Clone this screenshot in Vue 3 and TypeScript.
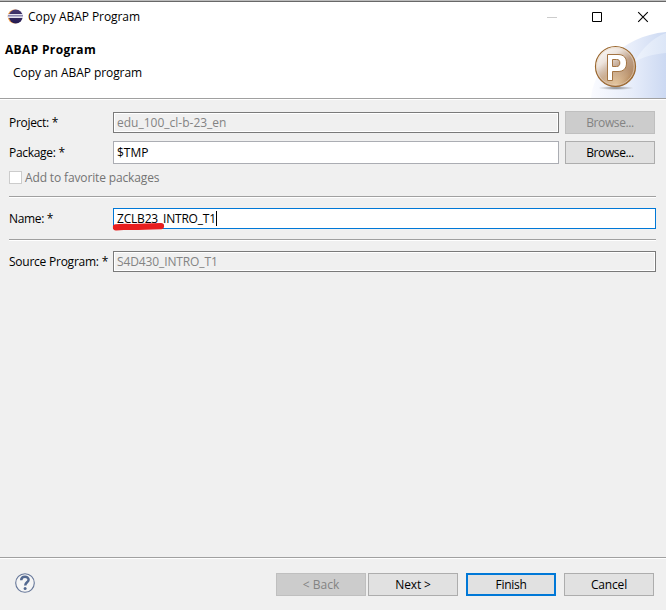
<script setup lang="ts">
import { ref } from 'vue'

const project = ref('edu_100_cl-b-23_en')
const packageName = ref('$TMP')
const programName = ref('ZCLB23_INTRO_T1')
const sourceProgram = ref('S4D430_INTRO_T1')
</script>

<template>
  <main class="dialog">
    <div class="titlebar">
      <svg class="app-icon" width="16" height="16" viewBox="0 0 16 16">
        <defs>
          <linearGradient id="ball" x1="0" y1="0" x2="0" y2="1">
            <stop offset="0" stop-color="#44366f" />
            <stop offset="1" stop-color="#251c52" />
          </linearGradient>
        </defs>
        <circle cx="7.6" cy="7.5" r="6.9" fill="#f3a04a" />
        <circle cx="8.8" cy="7.5" r="6.9" fill="url(#ball)" />
        <path d="M1 5.5h15M1 8.5h15" stroke="#e4e2ef" stroke-width="1" />
        <path d="M1 6.5h15" stroke="#8d88b2" stroke-width="1" />
        <path d="M1 7.5h15" stroke="#b9b6d0" stroke-width="1" />
      </svg>
      <span class="t-title">Copy ABAP Program</span>
      <svg class="window-buttons" width="110" height="12" viewBox="0 0 110 12" fill="none">
        <path d="M0 6.5h10" stroke="#ccc" />
        <path d="M45.5 1.5h9v9h-9z" stroke="#000" />
        <path d="M91.2 1.2l9.6 9.6M100.8 1.2l-9.6 9.6" stroke="#000" stroke-width="1.1" />
      </svg>
    </div>

    <header class="banner">
      <div class="banner-text">
        <h1 class="t-head">ABAP Program</h1>
        <p class="t-sub">Copy an ABAP program</p>
      </div>
      <svg class="banner-art" width="76" height="66" viewBox="0 0 76 66">
        <defs>
          <linearGradient id="swoosh" x1="0" y1="0" x2="1" y2="0">
            <stop offset="0" stop-color="#fafbff" />
            <stop offset=".55" stop-color="#e7edfa" />
            <stop offset="1" stop-color="#ccd9f2" />
          </linearGradient>
          <linearGradient id="swoosh2" x1="0" y1="0" x2="1" y2="0">
            <stop offset="0" stop-color="#eef3fc" />
            <stop offset="1" stop-color="#dce6f7" />
          </linearGradient>
          <linearGradient id="bronze" x1=".1" y1="0" x2=".85" y2="1">
            <stop offset="0" stop-color="#fff" />
            <stop offset=".3" stop-color="#ede4dd" />
            <stop offset=".55" stop-color="#bd9f87" />
            <stop offset=".8" stop-color="#b58d68" />
            <stop offset="1" stop-color="#99632c" />
          </linearGradient>
          <radialGradient id="glow" cx=".5" cy="1" r=".55">
            <stop offset="0" stop-color="#f2d6ad" stop-opacity=".8" />
            <stop offset="1" stop-color="#f2d6ad" stop-opacity="0" />
          </radialGradient>
          <radialGradient id="shade">
            <stop offset="0" stop-color="#555" stop-opacity=".75" />
            <stop offset="1" stop-color="#777" stop-opacity="0" />
          </radialGradient>
        </defs>
        <path d="M1 66C3 39 30 4 76 0V66Z" fill="url(#swoosh)" />
        <path d="M44 30C53 16 62 6 76 1V21C63 22 53 25 44 30Z" fill="url(#swoosh2)" />
        <ellipse cx="26" cy="56" rx="18" ry="2" fill="url(#shade)" />
        <circle cx="25.5" cy="34.5" r="20" fill="url(#bronze)" stroke="#9b682f" stroke-width="1.2" />
        <circle cx="25.5" cy="34.5" r="18.7" fill="url(#glow)" stroke="#ead9c6" stroke-opacity=".65" />
        <path
          d="M17.5 22.5H28C34 22.5 36.5 26 36.5 31C36.5 36.5 33.5 39.5 28 39.5H22.5V48.5H17.5Z M22.5 27.5V34.5H26.5C29 34.5 29.8 33 29.8 31C29.8 28.6 29 27.5 26.5 27.5Z"
          fill="#fff" fill-rule="evenodd" stroke="#a47442" stroke-width="1"
        />
      </svg>
    </header>

    <section class="form">
      <div class="row">
        <span class="label t-project">Project: *</span>
        <div class="field disabled"><span class="t-edu">{{ project }}</span></div>
        <button class="button browse" disabled><span class="t-browse">Browse...</span></button>
      </div>
      <div class="row package-row">
        <span class="label t-package">Package: *</span>
        <div class="field tall"><span class="t-tmp">{{ packageName }}</span></div>
        <button class="button browse"><span class="t-browse">Browse...</span></button>
      </div>
      <div class="favorite">
        <span class="checkbox"></span>
        <span class="t-fav">Add to favorite packages</span>
      </div>
      <div class="separator"></div>
      <div class="row name-row">
        <span class="label t-name">Name: *</span>
        <div class="field focused">
          <span class="t-zcl">{{ programName }}</span><i class="caret"></i>
          <svg class="marker" width="54" height="10" viewBox="0 0 54 10">
            <path d="M4 5.3C10 4.6 12 5 20 5C30 5 38 4.7 49 4.2" fill="none" stroke="#e81e1e" stroke-width="6.2" stroke-linecap="round" />
          </svg>
        </div>
      </div>
      <div class="separator"></div>
      <div class="row source-row">
        <span class="label t-source">Source Program: *</span>
        <div class="field disabled"><span class="t-s4d">{{ sourceProgram }}</span></div>
      </div>
    </section>

    <footer class="footer">
      <svg class="help" width="20" height="20" viewBox="0 0 20 20" fill="none">
        <circle cx="10" cy="10" r="9.3" fill="#f5f5f5" stroke="#667799" stroke-width="1.1" />
        <path d="M6.2 7.3C6.3 2.8 13.5 2.7 13.6 6.8C13.6 9.3 10.2 9.4 10.2 12.5" stroke="#536990" stroke-width="2.5" />
        <circle cx="10.1" cy="15.5" r="1.5" fill="#536990" />
      </svg>
      <button class="button back" disabled><span class="t-back">&lt; Back</span></button>
      <button class="button next"><span class="t-next">Next &gt;</span></button>
      <button class="button primary"><span class="t-finish">Finish</span></button>
      <button class="button cancel"><span class="t-cancel">Cancel</span></button>
    </footer>
  </main>
</template>

<style>
body {
  margin: 0;
}
</style>

<style scoped>
.dialog {
  box-sizing: border-box;
  display: flex;
  flex-direction: column;
  width: 666px;
  height: 610px;
  overflow: hidden;
  border-top: 1px solid #bdbdbd;
  background: #f0f0f0;
  color: #000;
  font: 12px/16px "Open Sans", "Noto Sans", sans-serif;
  white-space: nowrap;
}
.titlebar {
  box-sizing: border-box;
  display: flex;
  align-items: center;
  height: 31px;
  padding: 0 17px 0 7px;
  border-top: 1px solid #686868;
  background: #fff;
}
.app-icon {
  margin-right: 5px;
}
.window-buttons {
  margin-left: auto;
  margin-right: -8px;
}
.banner {
  box-sizing: border-box;
  display: flex;
  justify-content: space-between;
  height: 67px;
  border-bottom: 1px solid #a0a0a0;
  background: #fff;
}
.banner-text {
  padding: 10px 0 0 5px;
}
h1 {
  margin: 0;
  font-size: 12px;
  line-height: 16px;
}
p {
  margin: 7px 0 0 8px;
}
.banner-art {
  flex: none;
}
.t-title,
.t-sub {
  letter-spacing: -0.06px;
}
.t-head {
  letter-spacing: 0.34px;
}
.t-project,
.t-package {
  letter-spacing: -0.3px;
}
.t-name {
  letter-spacing: -0.33px;
}
.t-source {
  letter-spacing: -0.24px;
}
.t-fav {
  letter-spacing: -0.14px;
}
.t-zcl {
  letter-spacing: -0.2px;
}
.t-s4d {
  letter-spacing: -0.12px;
}
.t-browse {
  letter-spacing: -0.4px;
}
.t-next,
.t-cancel {
  letter-spacing: -0.15px;
}
.t-finish {
  letter-spacing: -0.3px;
}
.form {
  flex: 1;
  border-top: 1px solid #fff;
  padding: 11px 10px 0 9px;
}
.row {
  display: flex;
  align-items: center;
  height: 23px;
}
.package-row {
  margin-top: 7px;
}
.label {
  width: 104px;
  flex: none;
}
.field {
  box-sizing: border-box;
  position: relative;
  display: flex;
  align-items: center;
  flex: 1;
  height: 21px;
  padding-left: 3px;
  border: 1px solid #7a7a7a;
  background: #fff;
}
.field.tall {
  height: 23px;
  border-color: #abadb3;
}
.field.disabled {
  background: #f0f0f0;
  box-shadow: inset 0 0 0 1px #fff;
  color: #838383;
}
.field.focused {
  border-color: #0078d7;
}
.caret {
  width: 1px;
  height: 15px;
  background: #000;
}
.marker {
  position: absolute;
  left: -2px;
  top: 13px;
}
.button {
  box-sizing: border-box;
  display: flex;
  align-items: center;
  justify-content: center;
  flex: none;
  width: 90px;
  height: 23px;
  padding: 0;
  border: 1px solid #adadad;
  background: #e1e1e1;
  color: #000;
  font: inherit;
}
.button:disabled {
  border-color: #bfbfbf;
  background: #ccc;
  color: #838383;
}
.button.primary {
  border: 2px solid #0078d7;
}
.browse {
  margin: 0 1px 0 6px;
}
.favorite {
  display: flex;
  align-items: center;
  gap: 3px;
  height: 13px;
  margin: 7px 0 12px;
  color: #747474;
}
.checkbox {
  box-sizing: border-box;
  width: 13px;
  height: 13px;
  border: 1px solid #ccc;
  background: #fff;
}
.separator {
  height: 1px;
  border-top: 1px solid #a0a0a0;
  background: #fff;
}
.name-row,
.source-row {
  height: 21px;
  margin: 10px 0;
}
.footer {
  box-sizing: border-box;
  display: flex;
  align-items: flex-start;
  height: 53px;
  padding: 14px 12px 0 15px;
  border-top: 1px solid #a0a0a0;
  box-shadow: inset 0 1px #fff;
}
.footer .button {
  margin-top: 1px;
}
.help {
  margin-top: 1px;
}
.back {
  margin-left: auto;
}
.next {
  margin-left: 2px;
}
.primary,
.cancel {
  margin-left: 8px;
}
</style>
